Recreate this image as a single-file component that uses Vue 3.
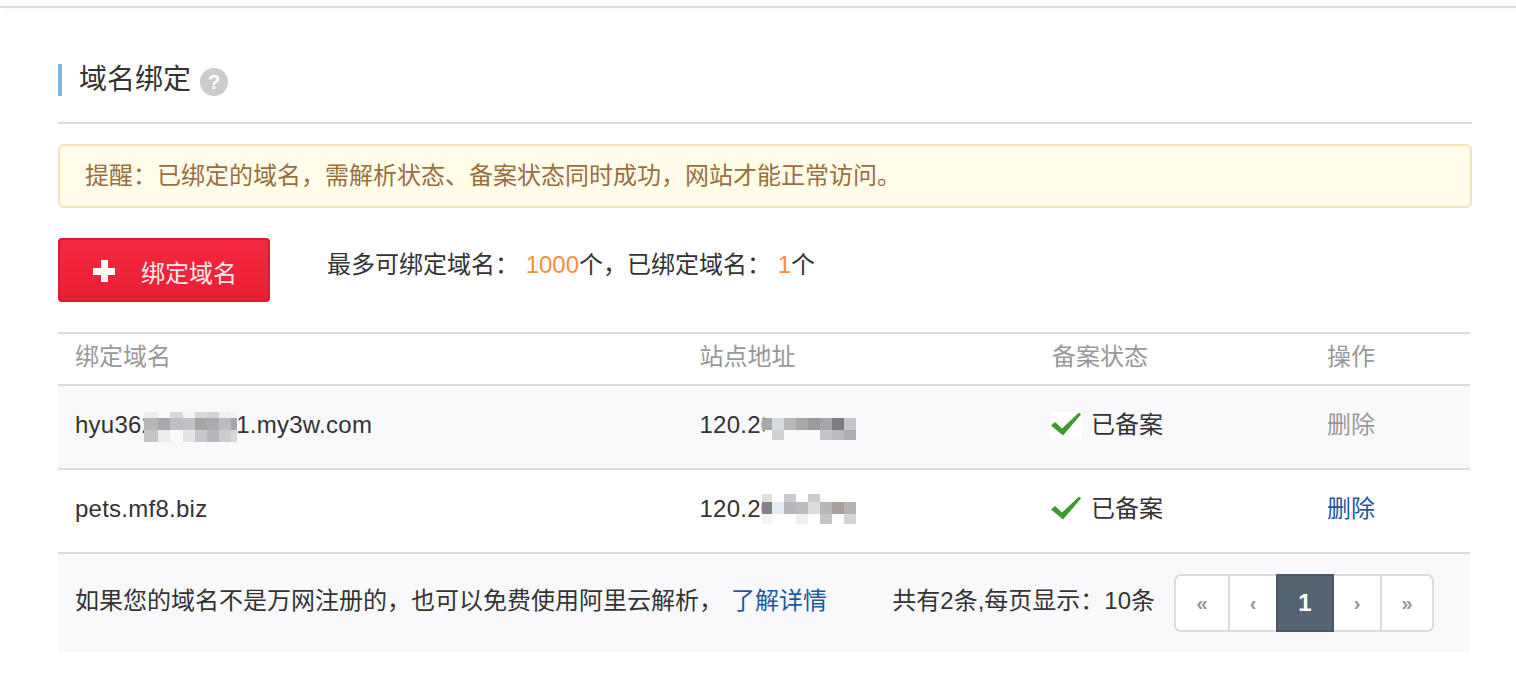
<script setup>
const mosaics = {
  a: {
    cols: '14px 12px 13px 12px 12px 12px 12px 6px',
    rows: '6px 12px 12px',
    cells: [
      '#eeeeee', '', '#d8d8dc', '#f4f4f6', '#d8d6d6', '#d4d4d6', '#f0f0f2', '#f4f4f4',
      '#b8b6b4', '#a8a8aa', '#bcc0c4', '#c0c2c4', '#a8a4a4', '#aaacb0', '#bcbcc0', '#a8a8ac',
      '#c4c4c4', '#ececee', '#f9f9fb', '#e4e4e6', '#c8c8cc', '#b8b8bc', '#cccccc', '#d8d8dc'
    ]
  },
  b: {
    cols: '10px repeat(7, 12px)',
    rows: '12px 10px',
    cells: [
      '#a8a8aa', '#d4dadf', '#b8b8ba', '#a8a8a8', '#9a9a9c', '#a4a6ae', '#7c7c82', '#c4c6cc',
      '', '#d0d0d2', '', '', '', '#c4c4c8', '#bcbcc0', '#aeaeb2'
    ]
  },
  c: {
    cols: '10px repeat(7, 12px)',
    rows: '8px 12px 10px',
    cells: [
      '#e0e0e0', '', '#cccccc', '', '#cccccc', '', '', '',
      '#848484', '#e4ecf2', '#b4b8bc', '#bcbcbc', '#dcdcdc', '#b8b8b8', '#a8a09c', '#b4b4b4',
      '#f4f4f6', '', '', '#f0f0f0', '', '#c4c4c4', '', '#d4d4d4'
    ]
  }
}
const pages = [
  { label: '«' }, { label: '‹' }, { label: '1', active: true }, { label: '›' }, { label: '»' }
]
</script>

<template>
  <div class="page">
    <div class="topline"></div>
    <main class="wrap">
      <h1 class="title">域名绑定<span class="help">?</span></h1>
      <div class="divider"></div>
      <div class="alert">提醒：已绑定的域名，需解析状态、备案状态同时成功，网站才能正常访问。</div>
      <div class="actions">
        <button class="add"><span class="plus"></span><span class="add-label">绑定域名</span></button>
        <p class="quota">最多可绑定域名： <b>1000</b>个，已绑定域名： <b>1</b>个</p>
      </div>
      <div class="table">
        <div class="row head">
          <span>绑定域名</span><span>站点地址</span><span>备案状态</span><span>操作</span>
        </div>
        <div class="row body shade">
          <span class="cell">hyu36<i class="cut cut-2">2</i><span class="tail">1.my3w.com</span>
            <div class="mosaic m-a" :style="{ gridTemplateColumns: mosaics.a.cols, gridTemplateRows: mosaics.a.rows }">
              <i v-for="(c, i) in mosaics.a.cells" :key="i" :style="{ background: c || 'transparent' }"></i>
            </div>
          </span>
          <span class="cell">120.2<i class="cut cut-0">0</i>
            <div class="mosaic m-b" :style="{ gridTemplateColumns: mosaics.b.cols, gridTemplateRows: mosaics.b.rows }">
              <i v-for="(c, i) in mosaics.b.cells" :key="i" :style="{ background: c || 'transparent' }"></i>
            </div>
          </span>
          <span class="status">
            <svg class="check boxed" viewBox="0 0 32 27"><path d="M1 13.5 5 10l7 6.5L29 .5l2 2-18 21z"/></svg>已备案
          </span>
          <span class="muted">删除</span>
        </div>
        <div class="row body">
          <span class="cell">pets.mf8.biz</span>
          <span class="cell">120.2<i class="cut cut-0">0</i>
            <div class="mosaic m-c" :style="{ gridTemplateColumns: mosaics.c.cols, gridTemplateRows: mosaics.c.rows }">
              <i v-for="(c, i) in mosaics.c.cells" :key="i" :style="{ background: c || 'transparent' }"></i>
            </div>
          </span>
          <span class="status">
            <svg class="check" viewBox="0 0 32 27"><path d="M1 13.5 5 10l7 6.5L29 .5l2 2-18 21z"/></svg>已备案
          </span>
          <a class="link">删除</a>
        </div>
        <div class="foot">
          <p class="tip">如果您的域名不是万网注册的，也可以免费使用阿里云解析，<a class="link more">了解详情</a></p>
          <div class="pager-box">
            <span class="count">共有2条,每页显示：10条</span>
            <div class="pager">
              <span v-for="p in pages" :key="p.label" class="pg" :class="{ active: p.active }">{{ p.label }}</span>
            </div>
          </div>
        </div>
      </div>
    </main>
  </div>
</template>

<style>
html, body { background: #fff; }
</style>

<style scoped>
.page {
  height: 700px;
  overflow: hidden;
  font-family: "Liberation Sans", "Noto Sans CJK SC", sans-serif;
  font-size: 24px;
  line-height: 32px;
  color: #333;
  background: #fff;
}
.topline {
  margin-top: 6px;
  height: 2px;
  background: #dcdcdc;
  box-shadow: 0 2px 6px rgba(0, 0, 0, .07);
}
.wrap { width: 1414px; margin-left: 58px; padding-top: 56px; }
.title {
  height: 32px;
  margin: 0 0 26px;
  padding-left: 17px;
  border-left: 4px solid #7fb6d5;
  display: flex;
  align-items: center;
  font-size: 28px;
  font-weight: 400;
  line-height: 32px;
  color: #333;
}
.help {
  width: 28px;
  height: 28px;
  margin: 4px 0 0 9px;
  border-radius: 50%;
  background: #ccc;
  color: #fff;
  font-size: 20px;
  font-weight: 700;
  line-height: 28px;
  text-align: center;
}
.divider { height: 2px; background: #dcdcdc; }
.alert {
  height: 64px;
  margin-top: 20px;
  box-sizing: border-box;
  border: 2px solid #f5e4bb;
  border-radius: 6px;
  background: #fffce9;
  color: #9a6f3f;
  padding-left: 25px;
  line-height: 60px;
}
.actions { display: flex; align-items: flex-start; margin-top: 30px; }
.add {
  width: 212px;
  height: 64px;
  box-sizing: border-box;
  display: flex;
  align-items: center;
  padding: 2px 0 0 33px;
  border: 2px solid #d91c30;
  border-radius: 4px;
  background: linear-gradient(#f4293f, #ea1e33);
  color: #ffe9ea;
  font: inherit;
}
.add-label { margin-top: 5px; }
.plus {
  position: relative;
  width: 22px;
  height: 22px;
  margin-right: 26px;
  flex: none;
}
.plus::before, .plus::after {
  content: "";
  position: absolute;
  background: #fff;
}
.plus::before { left: 8px; top: 0; width: 7px; height: 22px; }
.plus::after { left: 0; top: 8px; width: 22px; height: 7px; }
.quota { margin: 11px 0 0 57px; }
.quota b { font-weight: 400; color: #f0923a; }
.table { width: 1412px; margin-top: 30px; border-top: 2px solid #dcdcdc; }
.row {
  display: grid;
  grid-template-columns: 624.5px 352.5px 275px 1fr;
  padding-left: 17px;
  border-bottom: 2px solid #dcdcdc;
  align-items: center;
}
.head { height: 46px; padding-bottom: 4px; color: #999; }
.body { height: 78px; padding-bottom: 4px; }
.shade { background: #f9f9fb; }
.cell { position: relative; display: block; letter-spacing: .25px; }
.cut { display: inline-block; font-style: normal; }
.cut-2 { clip-path: inset(0 9px 0 0); }
.cut-0 { clip-path: inset(0 10px 0 0); }
.tail { margin-left: 81px; }
.mosaic { position: absolute; display: grid; }
.mosaic i { display: block; }
.m-a { left: 69px; top: 3px; }
.m-b { left: 62px; top: 9px; }
.m-c { left: 62px; top: 1px; }
.status { display: flex; align-items: center; margin-left: -2px; }
.check { width: 32px; height: 27px; margin-right: 9px; flex: none; fill: #3b9c2c; }
.boxed { background: #fff; }
.muted { color: #999; }
.link { color: #1c5a9f; }
.foot {
  height: 98px;
  display: flex;
  justify-content: space-between;
  align-items: center;
  padding: 0 36px 0 17px;
  background: #f9f9fb;
}
.tip { margin: 0 0 5px; }
.more { margin-left: 8px; }
.pager-box { display: flex; align-items: center; }
.count { margin: 0 19px 5px 0; }
.pager {
  display: flex;
  width: 260px;
  height: 58px;
  box-sizing: border-box;
  border: 2px solid #dcdcdc;
  border-radius: 7px;
  background: #fff;
}
.pg {
  width: 54px;
  box-sizing: border-box;
  display: flex;
  align-items: center;
  justify-content: center;
  border-right: 2px solid #dcdcdc;
  color: #999;
  font-size: 20px;
  font-weight: 700;
}
.pg:nth-child(2) { width: 46px; border-right: 0; }
.pg:nth-child(4) { width: 48px; }
.pg:last-child { flex: 1; border-right: 0; }
.pg.active {
  width: 58px;
  margin: -2px 0;
  border: 2px solid #4b5666;
  background: #566373;
  color: #fff;
  font-size: 24px;
}
</style>
